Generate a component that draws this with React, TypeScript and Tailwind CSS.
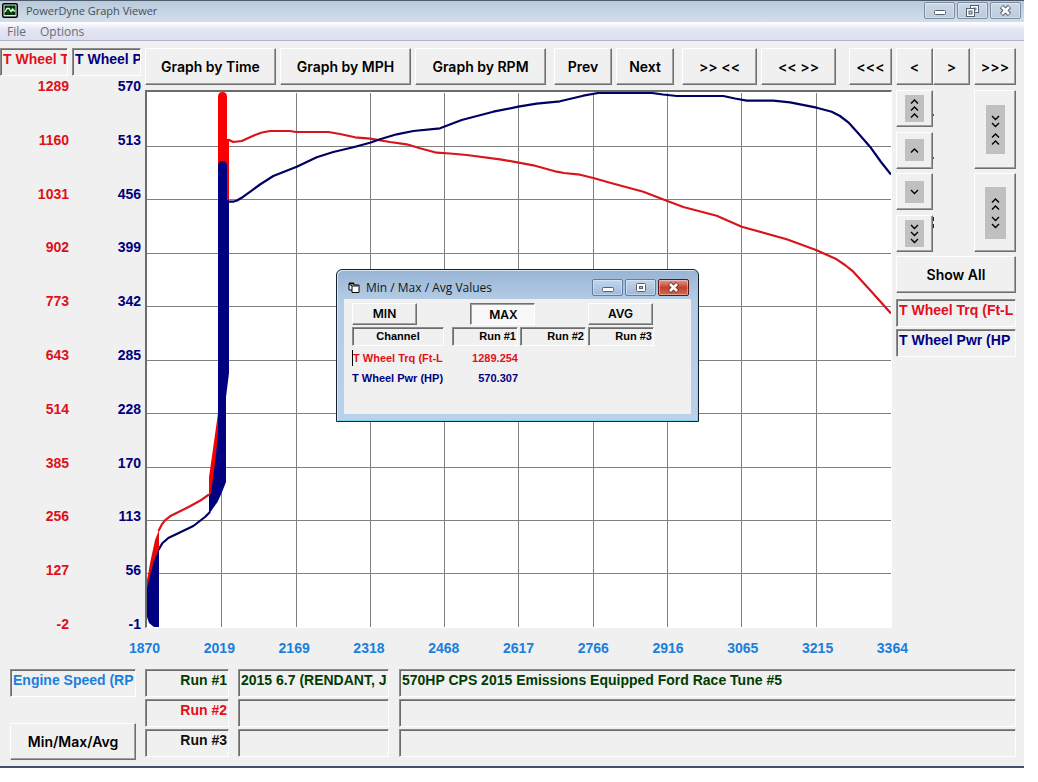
import type { ReactNode } from "react";

const TORQUE_TICKS = ["1289", "1160", "1031", "902", "773", "643", "514", "385", "256", "127", "-2"];
const POWER_TICKS = ["570", "513", "456", "399", "342", "285", "228", "170", "113", "56", "-1"];
const SPEED_TICKS = ["1870", "2019", "2169", "2318", "2468", "2617", "2766", "2916", "3065", "3215", "3364"];

const GRID_X = [221, 296, 370, 444, 518, 593, 667, 741, 816];
const GRID_Y = [146, 199, 253, 306, 360, 413, 467, 520, 573];

const RUNS = [
  { name: "Run #1", color: "text-[#003c00]", vehicle: "2015 6.7 (RENDANT, J", note: "570HP CPS 2015 Emissions Equipped Ford Race Tune #5" },
  { name: "Run #2", color: "text-[#e0101a]", vehicle: "", note: "" },
  { name: "Run #3", color: "text-[#101010]", vehicle: "", note: "" },
];

function PushButton({ children, className = "", label }: { children: ReactNode; className?: string; label?: string }) {
  return (
    <button
      type="button"
      aria-label={label}
      className={`flex shrink-0 items-center justify-center whitespace-pre border border-t-white border-l-white border-r-[#707070] border-b-[#707070] bg-[#f0f0f0] font-['Inter','Liberation_Sans',sans-serif] font-semibold text-black shadow-[inset_-1px_-1px_0_#a0a0a0] ${className}`}
    >
      {children}
    </button>
  );
}

function Field({ children, className = "" }: { children?: ReactNode; className?: string }) {
  return (
    <div
      className={`overflow-hidden whitespace-nowrap border border-t-[#8c8c8c] border-l-[#8c8c8c] border-r-white border-b-white bg-[#f0f0f0] px-px font-bold shadow-[inset_1px_1px_0_#6c6c6c] ${className}`}
    >
      {children}
    </div>
  );
}

function Chevrons({ dirs, gap = false, className = "" }: { dirs: string; gap?: boolean; className?: string }) {
  const step = 7;
  const items = dirs.split("");
  const height = items.length * step + (gap ? 4 : 0);
  return (
    <span className={`flex items-center justify-center bg-[#c0c0c0] ${className}`}>
      <svg width="9" height={height} viewBox={`0 0 9 ${height}`} fill="none" stroke="#000" strokeWidth="1.4">
        {items.map((d, i) => {
          const y = i * step + 1 + (gap && i >= items.length / 2 ? 4 : 0);
          return <path key={i} d={d === "u" ? `M1 ${y + 4.5}L4.5 ${y + 1}L8 ${y + 4.5}` : `M1 ${y + 1}L4.5 ${y + 4.5}L8 ${y + 1}`} />;
        })}
      </svg>
    </span>
  );
}

function MinimizeGlyph() {
  return (
    <svg width="12" height="10" viewBox="0 0 12 10">
      <rect x="0.5" y="4.5" width="11" height="4" rx="1" fill="#fff" stroke="#56606e" />
    </svg>
  );
}

function CloseGlyph({ stroke }: { stroke: string }) {
  return (
    <svg width="13" height="11" viewBox="0 0 13 11" fill="none">
      <path d="M2.500 1.500L10.500 9.500M10.500 1.500L2.500 9.500" stroke={stroke} strokeWidth="4.6" />
      <path d="M3 2L10 9M10 2L3 9" stroke="#fff" strokeWidth="2.6" />
    </svg>
  );
}

function RestoreGlyph() {
  return (
    <svg width="13" height="12" viewBox="0 0 13 12" fill="none">
      <rect x="4.500" y="0.500" width="8" height="7" fill="#fff" stroke="#56606e" />
      <rect x="7.500" y="3" width="2.500" height="2" fill="#c5d3e3" stroke="#56606e" strokeWidth="0.800" />
      <rect x="0.500" y="3.500" width="8" height="8" fill="#fff" stroke="#56606e" />
      <rect x="3" y="6" width="3" height="3" fill="#c5d3e3" stroke="#56606e" />
    </svg>
  );
}

function MaximizeGlyph() {
  return (
    <svg width="12" height="10" viewBox="0 0 12 10" fill="none">
      <rect x="1.500" y="0.500" width="9" height="8" rx="1" fill="#fff" stroke="#56606e" />
      <rect x="4.500" y="3.500" width="3" height="2" fill="#9fb8d4" stroke="#56606e" />
    </svg>
  );
}

function CaptionButton({ label, children, className = "" }: { label: string; children: ReactNode; className?: string }) {
  return (
    <button
      type="button"
      aria-label={label}
      className={`flex w-[31px] items-center justify-center rounded-xs border shadow-[inset_0_0_0_1px_#ffffff60] ${className}`}
    >
      {children}
    </button>
  );
}

function TitleBar() {
  const caption = "border-[#7d8ea2] bg-gradient-to-b from-[#cbd8e6] to-[#bccbdc]";
  return (
    <header className="flex h-[22px] items-start border-t border-[#4c5b6c] bg-gradient-to-b from-[#b9cadb] to-[#d3deea] pr-[3px] pl-0.5">
      <svg className="mt-0.5" width="16" height="15" viewBox="0 0 16 15">
        <rect x="0.75" y="0.75" width="14.5" height="13.5" rx="1.5" fill="#dfe6dc" stroke="#000" strokeWidth="1.5" />
        <rect x="2.5" y="2.5" width="11" height="9.5" fill="#022c08" />
        <path d="M3 5.5h10M3 8.5h10M6 3v9M10 3v9" stroke="#0b6a1c" strokeWidth="0.7" />
        <path d="M3 9L5 5.5H7L9 8.5L10.5 6L13 8.5" fill="none" stroke="#d6ffd6" strokeWidth="1.3" />
      </svg>
      <h1 className="ml-2 grow font-['Open_Sans',sans-serif] text-[11px] leading-5 text-[#454e58]">PowerDyne Graph Viewer</h1>
      <div className="mt-px flex h-[17px] gap-0.5">
        <CaptionButton label="Minimize" className={caption}><MinimizeGlyph /></CaptionButton>
        <CaptionButton label="Restore" className={caption}><RestoreGlyph /></CaptionButton>
        <CaptionButton label="Close" className={caption}><CloseGlyph stroke="#56606e" /></CaptionButton>
      </div>
    </header>
  );
}

function Toolbar() {
  return (
    <div className="flex h-[37px] gap-1 text-sm">
      <div className="flex grow gap-1">
        <PushButton className="w-[131px]">Graph by Time</PushButton>
        <PushButton className="w-[131px]">Graph by MPH</PushButton>
        <PushButton className="w-[131px]">Graph by RPM</PushButton>
        <PushButton className="ml-1 w-[58px]">Prev</PushButton>
        <PushButton className="w-[58px]">Next</PushButton>
        <PushButton className="ml-1 w-[75px]">{">> <<"}</PushButton>
        <PushButton className="w-[75px]">{"<< >>"}</PushButton>
        <PushButton className="ml-auto w-[43px]">{"<<<"}</PushButton>
      </div>
      <div className="flex w-[120px]">
        <PushButton className="w-[37px]">{"<"}</PushButton>
        <PushButton className="w-[37px]">{">"}</PushButton>
        <PushButton className="ml-auto w-[42px]">{">>>"}</PushButton>
      </div>
    </div>
  );
}

function Plot() {
  return (
    <svg className="block h-[535px] w-full bg-white" viewBox="147 92 744 535" preserveAspectRatio="none" role="img" aria-label="Wheel torque and power by engine speed">
      <g stroke="#808080" strokeWidth="1" shapeRendering="crispEdges">
        {GRID_X.map((x) => <path key={x} d={`M${x + 0.5} 93V627`} />)}
        {GRID_Y.map((y) => <path key={y} d={`M147 ${y + 0.5}H891`} />)}
      </g>
      <g fill="none" strokeWidth="2.2" strokeLinejoin="round">
        <path stroke="#d8141c" d="M209 494.5L201.700 499.700L190 506.300L170 516.300L165 520.300L161.700 524.700L158.500 531" />
        <path stroke="#d8141c" d="M228 139.500L233.300 142L241.700 141L255 135L262 132.500L270 131H290L296 132H328.300L340 134L355 137.300L370 138.700L390 142L406.700 144.300L420 148.300L436.700 152.700L450 153.500L466.700 155L500 159.300L533.300 165.300L556.700 171.700L564 173L580 174.700L593.300 178L610 182.700L643.300 191.700L666.700 200.700L683.300 207L716.700 215.700L741.700 226.700L786.700 239.300L816.700 250.300L836.700 259.300L845 265L853.300 271.700L870 290L891 313.500" />
        <path stroke="#000060" d="M158.500 550L162.300 543.300L168.300 538L193.300 526L205 517L210 512" />
        <path stroke="#000060" d="M228 201.700H233L237 200.500L243.300 196.700L251.700 190.700L260 184.500L273.300 176L296.700 166.700L316.700 157.300L333.300 152L353.300 147.300L370 142.700L380 139.300L396.700 134.300L413.300 131L440 128.300L461.700 120L493.300 111.700L518.300 106.700L536.700 103.700L560 101.300L583.300 95.700L598.300 93H651.700L663 94.500L676.700 96H723.300L735 98.500L746.700 100.700H773.300L790 102.300L816.700 107.700L831.700 111.700L840 116L848.300 122.300L858 133L870 146.700L881 162L891 174.500" />
      </g>
      <path fill="#f80000" d="M218 413V97Q218 92 222.500 92Q227 92 227 97V139H229V202H222V480L209 496V477L213.300 446.700Z" />
      <path fill="#e80808" d="M159 530V560L147 592V580L150.700 560L155 540Z" />
      <path fill="#000080" d="M218 433V166Q218 161 222.500 161Q227 161 227 166V200H229V373L226 397V482L221.700 493L217.500 502L209 514V496L211 493L215 463Z" />
      <path fill="#000080" d="M159 549V627H154L149 623L147 617V588L153.300 563Z" />
    </svg>
  );
}

function MinMaxDialog() {
  const caption = "border-[#5f7d9e] bg-gradient-to-b from-[#c3d6ea] to-[#9db9d8]";
  return (
    <section
      role="dialog"
      aria-labelledby="values-title"
      className="absolute top-[177px] left-1/2 -ml-[183px] w-[363px] rounded-t-md border border-[#14202c] bg-gradient-to-b from-[#98b4d4] from-0% via-[#b4cce6] via-20% to-[#b9d1ea] px-[7px] pb-[7px] shadow-[inset_1px_1px_0_#d8e8f6,inset_-1px_-1px_0_#7fd6ee]"
    >
      <div className="flex h-[29px] items-center pt-1.5 pl-1">
        <svg width="12" height="12" viewBox="0 0 12 12">
          <path d="M1 1.500H6V3H11V10.500H4V8H1Z" fill="#fff" stroke="#000" />
          <path d="M1 2L4 4V8M4 4H10" fill="none" stroke="#000" />
          <path d="M1 1.500H6" stroke="#000" strokeWidth="2" />
        </svg>
        <h2 id="values-title" className="ml-1.5 grow font-['Open_Sans',sans-serif] text-xs leading-4 text-[#101820]">Min / Max / Avg Values</h2>
        <div className="mr-0.5 flex h-[17px] gap-0.5">
          <CaptionButton label="Minimize" className={caption}><MinimizeGlyph /></CaptionButton>
          <CaptionButton label="Maximize" className={caption}><MaximizeGlyph /></CaptionButton>
          <CaptionButton label="Close" className="border-[#5a1a14] bg-gradient-to-b from-[#dd9a8c] via-[#c5402c] via-50% to-[#cf6a50]"><CloseGlyph stroke="#6e3a34" /></CaptionButton>
        </div>
      </div>
      <div className="h-[115px] bg-[#f0f0f0] px-2 pt-1">
        <div className="flex h-[22px] gap-[53px] text-xs">
          <PushButton className="w-[65px]">MIN</PushButton>
          <button
            type="button"
            aria-pressed="true"
            className="w-[65px] border border-t-[#707070] border-l-[#707070] border-r-white border-b-white bg-[#f8f8f8] pt-0.5 pl-0.5 font-['Inter','Liberation_Sans',sans-serif] font-semibold shadow-[inset_1px_1px_0_#a0a0a0]"
          >
            MAX
          </button>
          <PushButton className="w-[65px]">AVG</PushButton>
        </div>
        <table className="mt-0.5 w-[304px] table-fixed text-[11px] font-bold">
          <thead>
            <tr>
              <th className="w-[100px] p-0"><Field className="mr-2 h-[19px] text-center leading-4">Channel</Field></th>
              <th className="p-0"><Field className="mr-0.5 h-[19px] text-right leading-4">Run #1</Field></th>
              <th className="p-0"><Field className="mr-0.5 h-[19px] text-right leading-4">Run #2</Field></th>
              <th className="p-0"><Field className="mr-0.5 h-[19px] text-right leading-4">Run #3</Field></th>
            </tr>
          </thead>
          <tbody>
            <tr className="h-5 text-[#e0101a]">
              <td className="p-0 pt-1"><div className="h-4 border-l border-black leading-4 whitespace-nowrap">T Wheel Trq (Ft-L</div></td>
              <td className="p-0 pt-1 pr-0.5 text-right leading-4">1289.254</td>
              <td /><td />
            </tr>
            <tr className="h-5 text-[#00007f]">
              <td className="p-0 pt-1 leading-4 whitespace-nowrap">T Wheel Pwr (HP)</td>
              <td className="p-0 pt-1 pr-0.5 text-right leading-4">570.307</td>
              <td /><td />
            </tr>
          </tbody>
        </table>
      </div>
    </section>
  );
}

function ScrollPanel() {
  return (
    <aside className="w-[120px] shrink-0 text-sm">
      <div className="flex h-[162px] justify-between">
        <div className="flex flex-col justify-between">
          <div className="flex items-center">
            <PushButton label="Page up" className="h-[37px] w-[37px]"><Chevrons dirs="uuu" className="h-[27px] w-[19px]" /></PushButton>
            <i className="mt-3 h-0.5 w-px bg-[#505050]" />
          </div>
          <div className="flex items-center">
            <PushButton label="Up" className="h-[37px] w-[37px]"><Chevrons dirs="u" className="h-[22px] w-[19px]" /></PushButton>
            <i className="mt-4 h-0.5 w-px bg-[#505050]" />
          </div>
          <PushButton label="Down" className="h-[37px] w-[37px]"><Chevrons dirs="d" className="h-[22px] w-[19px]" /></PushButton>
          <div className="flex items-start">
            <PushButton label="Page down" className="h-[37px] w-[37px]"><Chevrons dirs="ddd" className="h-[27px] w-[19px]" /></PushButton>
            <i className="mt-0.5 h-[11px] w-px border-y-4 border-[#103020]" />
          </div>
        </div>
        <div className="flex flex-col justify-between">
          <PushButton label="Compress" className="h-[79px] w-[42px]"><Chevrons dirs="dduu" gap className="h-[49px] w-[19px]" /></PushButton>
          <PushButton label="Expand" className="h-[79px] w-[42px]"><Chevrons dirs="uudd" gap className="h-[52px] w-[21px]" /></PushButton>
        </div>
      </div>
      <PushButton className="mt-1 h-[37px] w-full">Show All</PushButton>
      <Field className="mt-1.5 h-7 pl-0.5 leading-5 text-[#e0101a]">T Wheel Trq (Ft-L</Field>
      <Field className="mt-0.5 h-7 pl-0.5 leading-5 text-[#00007f]">T Wheel Pwr (HP</Field>
    </aside>
  );
}

export default function App() {
  return (
    <div className="min-h-screen bg-white pr-3.5 pb-3.5 font-['Liberation_Sans',Arial,sans-serif] text-sm">
      <main className="flex flex-col border-b-2 border-[#45506a] bg-[#f0f0f0]">
        <TitleBar />
        <nav className="flex h-[19px] gap-3.5 border-b border-[#b4b4c8] bg-gradient-to-b from-white via-[#e4e6f4] via-40% to-[#dcdff0] pl-[7px] font-['Open_Sans',sans-serif] text-xs leading-5 text-[#6c6c72]">
          <button type="button" className="leading-5">File</button>
          <button type="button" className="leading-5">Options</button>
        </nav>

        <div className="flex pt-[7px] pr-2">
          <div className="w-[145px] shrink-0">
            <div className="flex gap-1">
              <Field className="h-7 w-[68px] pl-0.5 leading-5 text-[#e0101a]">T Wheel T</Field>
              <Field className="h-7 w-[69px] pl-0.5 leading-5 text-[#00007f]">T Wheel P</Field>
            </div>
            <div className="flex h-[558px] pr-1 text-right font-bold">
              <ol className="flex w-[69px] flex-col justify-between text-[#e0101a]">
                {TORQUE_TICKS.map((t) => <li key={t}>{t}</li>)}
              </ol>
              <ol className="flex grow flex-col justify-between text-[#00007f]">
                {POWER_TICKS.map((t) => <li key={t}>{t}</li>)}
              </ol>
            </div>
          </div>

          <div className="min-w-0 grow">
            <Toolbar />
            <div className="mt-[5px] flex gap-1">
              <div className="min-w-0 grow">
                <div className="relative border-t-2 border-r border-b border-l-2 border-t-[#6c6c6c] border-r-white border-b-white border-l-[#6c6c6c]">
                  <Plot />
                  <MinMaxDialog />
                </div>
                <ol className="-mx-4 mt-2.5 flex justify-between font-bold text-[#1a7fdc]">
                  {SPEED_TICKS.map((t) => <li key={t}>{t}</li>)}
                </ol>
              </div>
              <ScrollPanel />
            </div>
          </div>
        </div>

        <div className="mt-[11px] flex pr-2 pb-1.5 pl-2.5">
          <div className="mr-[9px] flex w-[126px] flex-col justify-between">
            <Field className="h-7 pl-0.5 leading-5 text-[#1a7fdc]">Engine Speed (RP</Field>
            <PushButton className="h-[37px]">Min/Max/Avg</PushButton>
          </div>
          <div className="flex grow flex-col gap-0.5 pb-[3px]">
            {RUNS.map((run) => (
              <div key={run.name} className={`flex leading-5 ${run.color}`}>
                <Field className="h-7 w-[84px] text-right">{run.name}</Field>
                <Field className="ml-[9px] h-7 w-[151px] pl-0.5">{run.vehicle}</Field>
                <Field className="ml-2.5 h-7 grow pl-0.5">{run.note}</Field>
              </div>
            ))}
          </div>
        </div>
      </main>
    </div>
  );
}
